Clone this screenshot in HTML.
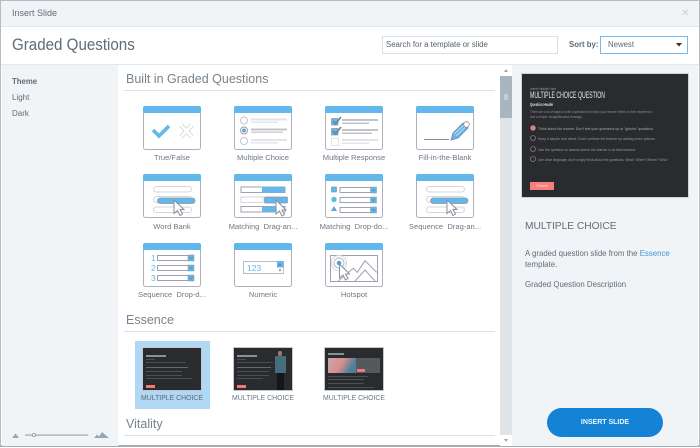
<!DOCTYPE html>
<html><head><meta charset="utf-8"><style>
html,body{margin:0;padding:0;width:700px;height:448px;overflow:hidden;background:#fff}
body{position:relative;font-family:"Liberation Sans",sans-serif;color:#66737f}
.a{position:absolute;white-space:nowrap}
.l{font-size:7.6px;color:#6d7983;text-align:center;line-height:10px}
.m{font-size:6.9px;color:#6d7983;text-align:center;line-height:10px}
.h{font-size:12.5px;color:#77838d;line-height:14px}
.t{position:absolute;background:#2a2b2f;border:1px solid #c4c8cc;box-sizing:border-box;overflow:hidden}
.ln{position:absolute;height:1px;background:#4c4e52}
.s{transform-origin:0 50%}
.b{filter:blur(.3px)}
</style></head><body>
<div class="a" style="left:0;top:0;width:700px;height:447px;box-sizing:border-box;border:1px solid #b9bcbe;border-bottom:2px solid #a9acae"></div>
<div class="a" style="left:1px;top:1px;width:698px;height:25px;background:#f1f4f7;border-bottom:1px solid #e2e6ea"></div>
<div class="a" style="left:12px;top:7px;font-size:9px;line-height:13px;color:#5f6c77">Insert Slide</div>
<div class="a" style="left:681px;top:7px;font-size:10px;line-height:13px;color:#c9ced2">✕</div>
<div class="a s" style="left:12px;top:34px;font-size:17px;line-height:22px;color:#5e6d7a;transform:scaleX(.89)">Graded Questions</div>
<div class="a" style="left:382px;top:36px;width:176px;height:18px;box-sizing:border-box;border:1px solid #d9e0e5;font-size:7.800px;line-height:16px;padding-left:3px;color:#58636d">Search for a template or slide</div>
<div class="a" style="left:569px;top:39px;font-size:7.8px;font-weight:bold;line-height:12px;color:#5f6c77">Sort by:</div>
<div class="a" style="left:600px;top:36px;width:88px;height:18px;box-sizing:border-box;border:1px solid #79b8ea;font-size:7.8px;line-height:16px;padding-left:7px;color:#5f6c77">Newest</div>
<svg class="a" style="left:676px;top:43px" width="6" height="4"><path d="M0 0H6L3 3.6Z" fill="#333"/></svg>
<div class="a" style="left:1px;top:64px;width:698px;height:1px;background:#e4e8eb"></div>
<div class="a" style="left:2px;top:65px;width:116px;height:381px;background:#f1f4f7"></div>
<div class="a" style="left:12px;top:76px;font-size:7.8px;font-weight:bold;line-height:12px;color:#5f6c77">Theme</div>
<div class="a" style="left:12px;top:92px;font-size:8px;line-height:12px;color:#5f6c77">Light</div>
<div class="a" style="left:12px;top:108px;font-size:8px;line-height:12px;color:#5f6c77">Dark</div>
<svg class="a" style="left:10px;top:430px" width="102" height="12" fill="#9aa7b1"><path d="M2 8L5.500 3.500L9 8Z"/><rect x="15" y="4.500" width="63" height="1.200"/><circle cx="24" cy="5" r="1.600" fill="#f1f4f7" stroke="#8a98a3" stroke-width=".8"/><path d="M84 8L87 4.500L89 6.500L92 2L99 8Z"/></svg>
<div class="a h" style="left:126px;top:72px">Built in Graded Questions</div>
<div class="a" style="left:124px;top:90px;width:371px;height:1px;background:#dfe1e3"></div>
<div class="a h" style="left:126px;top:313px">Essence</div>
<div class="a" style="left:124px;top:331px;width:371px;height:1px;background:#dfe1e3"></div>
<div class="a h" style="left:126px;top:417px">Vitality</div>
<div class="a" style="left:124px;top:435px;width:371px;height:1px;background:#dfe1e3"></div>

<div class="a" style="left:500px;top:65px;width:12px;height:381px;background:#dfe4e8"></div>
<div class="a" style="left:500px;top:65px;width:12px;height:11px;background:#fff"></div>
<div class="a" style="left:500px;top:76px;width:12px;height:42px;background:#a9b6c0"></div>
<div class="a" style="left:504px;top:94px;width:4px;height:6px;background:#c5ced5"></div>
<div class="a" style="left:500px;top:435px;width:12px;height:11px;background:#fff"></div>
<svg class="a" style="left:500px;top:65px" width="12" height="381" fill="#9aa5ae"><path d="M4 7L6 4L8 7Z"/><path d="M4 374L6 377L8 374Z"/></svg>
<div class="a" style="left:512px;top:65px;width:186px;height:381px;background:#f1f4f7"></div>

<!-- icons -->
<svg class="a" style="left:0;top:0" width="700" height="448">
<defs>
<g id="w"><rect x=".5" y=".5" width="57" height="43" rx="2" fill="#fff" stroke="#aeb0bc"/><path d="M0 7V2Q0 0 2 0H56Q58 0 58 2V7Z" fill="#62b8ea"/></g>
<g id="bk"><rect x="10.500" y="12.500" width="38" height="5.500" rx="2.750" fill="#fff" stroke="#d5d6da"/><rect x="10.500" y="22.500" width="38" height="6" rx="3" fill="#fff" stroke="#d5d6da"/><rect x="10.500" y="33" width="38" height="5.500" rx="2.750" fill="#fff" stroke="#d5d6da"/><rect x="14.500" y="24" width="37.500" height="5.500" rx="2.750" fill="#62b8ea" stroke="#8a93a6" stroke-width=".7"/><path d="M31 26V39.500L34.500 36.500L37 41.500L39.500 40L37 35.500H41Z" fill="#fff" stroke="#8b8f9b"/></g>
<g id="dd"><rect x=".5" y=".5" width="36" height="5" fill="#fff" stroke="#9da1b0"/><rect x="31" y="0" width="6" height="6" fill="#62b8ea" stroke="#8a93a6" stroke-width=".5"/><path d="M32.500 2L34 4L35.500 2" fill="none" stroke="#4d7ea3" stroke-width=".6"/></g>
</defs>
<g transform="translate(143 106)"><use href="#w"/><path d="M10 24L16 30L26 20" fill="none" stroke="#62b8ea" stroke-width="3.600"/><path d="M38 19L49 31M49 19L38 31" stroke="#d0d2d6" stroke-width="4.400" fill="none"/><path d="M38 19L49 31M49 19L38 31" stroke="#fff" stroke-width="2.800" fill="none"/></g>
<g transform="translate(234 106)"><use href="#w"/><circle cx="10" cy="14.500" r="3.500" fill="#fff" stroke="#c4c5cb"/><circle cx="10" cy="24.500" r="3.500" fill="#fff" stroke="#9a9eac"/><circle cx="10" cy="24.500" r="2" fill="#62a9d8"/><circle cx="10" cy="35" r="3.500" fill="#fff" stroke="#c4c5cb"/><g fill="#e3e4e7"><rect x="17" y="12.500" width="36" height="2"/><rect x="17" y="15.500" width="27" height="1.500"/><rect x="17" y="33" width="36" height="2"/><rect x="17" y="36" width="27" height="1.500"/></g><rect x="17" y="22.500" width="36" height="2" fill="#c2c4ca"/><rect x="17" y="25.500" width="32" height="1.500" fill="#d0d1d6"/></g>
<g transform="translate(325 106)"><use href="#w"/><g fill="#62b8ea" stroke="#8a93a6" stroke-width=".7"><rect x="6.500" y="12.500" width="6.500" height="6.500"/><rect x="6.500" y="22.500" width="6.500" height="6.500"/></g><rect x="6.500" y="32.500" width="7" height="7" fill="#fff" stroke="#e3e4e7"/><path d="M8 15L10.500 18L16 11M8 25L10.500 28L16 21" stroke="#62859f" stroke-width="1.600" fill="none"/><g fill="#c2c4ca"><rect x="17" y="13" width="36" height="2"/><rect x="17" y="16.500" width="27" height="1.500"/><rect x="17" y="23" width="36" height="2"/><rect x="17" y="26.500" width="30" height="1.500"/></g><g fill="#e3e4e7"><rect x="17" y="33" width="36" height="2"/><rect x="17" y="36.500" width="27" height="1.500"/></g></g>
<g transform="translate(416 106)"><use href="#w"/><path d="M8 33.500H33" stroke="#8a8d99" stroke-width="1"/><path d="M35 34L37 27L47 17L52 22L42 32Z" fill="#62b8ea" stroke="#7a8599" stroke-width=".8"/><path d="M38 28L49 18M40 30L50.500 20" stroke="#dfe9f1" stroke-width=".7"/><circle cx="50.500" cy="18.500" r="2.800" fill="#fff" stroke="#8a8d99" stroke-width=".8"/></g>

<g transform="translate(143 174)"><use href="#w"/><use href="#bk"/></g>
<g transform="translate(234 174)"><use href="#w"/><rect x="7" y="13" width="44" height="5.500" fill="#fff" stroke="#9da1b0"/><rect x="28" y="13" width="23" height="5.500" rx="1" fill="#62b8ea"/><rect x="7" y="23" width="22" height="5.500" fill="#fff" stroke="#d5d6da"/><rect x="30.500" y="23" width="23" height="6" rx="1" fill="#62b8ea" stroke="#8a93a6" stroke-width=".7"/><rect x="7" y="32.500" width="44" height="5.500" fill="#fff" stroke="#9da1b0"/><rect x="28" y="32.500" width="18" height="5.500" rx="1" fill="#62b8ea"/><path d="M42 26V40L45.500 37L48 42L50.500 40.500L48 36H52Z" fill="#fff" stroke="#8b8f9b"/></g>
<g transform="translate(325 174)"><use href="#w"/><rect x="6.500" y="13" width="5" height="5" fill="#62b8ea" stroke="#7a8da3" stroke-width=".6"/><circle cx="9" cy="25.500" r="2.700" fill="#62b8ea"/><path d="M6 37L9 32L12 37Z" fill="#5aa7d8"/><use href="#dd" transform="translate(14.500 13)"/><use href="#dd" transform="translate(14.500 23)"/><use href="#dd" transform="translate(14.500 33)"/></g>
<g transform="translate(416 174)"><use href="#w"/><use href="#bk"/></g>

<g transform="translate(143 243)"><use href="#w"/><g font-family="Liberation Sans" font-size="8.500" fill="#62b8ea"><text x="8" y="18">1</text><text x="8" y="28">2</text><text x="8" y="38">3</text></g><use href="#dd" transform="translate(14 12)"/><use href="#dd" transform="translate(14 22)"/><use href="#dd" transform="translate(14 32)"/></g>
<g transform="translate(234 243)"><use href="#w"/><rect x="9.500" y="18.500" width="40" height="12" fill="#fff" stroke="#b9bbc6"/><rect x="43" y="18" width="6.500" height="6.500" fill="#62b8ea"/><path d="M44.500 23L46 21L47.500 23" fill="none" stroke="#4d7ea3" stroke-width=".7"/><path d="M44.500 26.500L46 28.500L47.500 26.500Z" fill="#777"/><text x="13" y="28" font-family="Liberation Sans" font-size="8.500" fill="#62b8ea">123</text></g>
<g transform="translate(325 243)"><use href="#w"/><rect x="5.500" y="12.500" width="47" height="26" fill="#fff" stroke="#9da1b0"/><circle cx="14" cy="20" r="7.500" fill="none" stroke="#d3d5da"/><circle cx="14" cy="20" r="5" fill="none" stroke="#b9bbc6"/><circle cx="14" cy="20" r="2.300" fill="#4da4df"/><path d="M13.300 38L28.300 25.300L32.300 29.300L40 17.700L51.700 29.300M30 38L40 27L50 38" fill="none" stroke="#9da1b0"/><path d="M14.500 21V35L18 32L20.500 37L23 35.500L20.500 31H24.500Z" fill="#fff" stroke="#8b8f9b"/></g>
</svg>

<div class="a l" style="left:122px;top:153px;width:100px">True/False</div>
<div class="a l" style="left:213px;top:153px;width:100px">Multiple Choice</div>
<div class="a l" style="left:304px;top:153px;width:100px">Multiple Response</div>
<div class="a l" style="left:395px;top:153px;width:100px">Fill-in-the-Blank</div>
<div class="a l" style="left:122px;top:222px;width:100px">Word Bank</div>
<div class="a l" style="left:213px;top:222px;width:100px">Matching &nbsp;Drag-an...</div>
<div class="a l" style="left:304px;top:222px;width:100px">Matching &nbsp;Drop-do...</div>
<div class="a l" style="left:395px;top:222px;width:100px">Sequence &nbsp;Drag-an...</div>
<div class="a l" style="left:122px;top:290px;width:100px">Sequence &nbsp;Drop-d...</div>
<div class="a l" style="left:213px;top:290px;width:100px">Numeric</div>
<div class="a l" style="left:304px;top:290px;width:100px">Hotspot</div>

<!-- thumbnails -->
<div class="a" style="left:135px;top:341px;width:75px;height:68px;background:#b0d7f3"></div>
<div class="t b" style="left:142px;top:347px;width:60px;height:44px">
<div class="ln" style="left:3px;top:7px;width:20px;height:2px;background:#8f8f91"></div>
<div class="ln" style="left:3px;top:11px;width:9px"></div><div class="ln" style="left:3px;top:14px;width:40px"></div>
<div class="ln" style="left:3px;top:19px;width:42px;background:#66686c"></div><div class="ln" style="left:3px;top:23px;width:36px"></div><div class="ln" style="left:3px;top:27px;width:36px"></div><div class="ln" style="left:3px;top:30px;width:46px"></div>
<div class="a" style="left:3px;top:37px;width:9px;height:3px;background:#f07a78"></div></div>
<div class="t b" style="left:233px;top:347px;width:60px;height:44px">
<div class="ln" style="left:3px;top:7px;width:20px;height:2px;background:#8f8f91"></div>
<div class="ln" style="left:3px;top:11px;width:9px"></div><div class="ln" style="left:3px;top:14px;width:36px"></div>
<div class="ln" style="left:3px;top:19px;width:34px;background:#66686c"></div><div class="ln" style="left:3px;top:23px;width:32px"></div><div class="ln" style="left:3px;top:27px;width:32px"></div><div class="ln" style="left:3px;top:30px;width:26px"></div>
<div class="a" style="left:3px;top:37px;width:9px;height:3px;background:#f07a78"></div>
<div class="a" style="left:44px;top:3px;width:4px;height:5px;border-radius:2px;background:#9a7c68"></div>
<div class="a" style="left:41px;top:8px;width:11px;height:17px;background:#456d7c"></div>
<div class="a" style="left:43px;top:25px;width:7px;height:17px;background:#15161a"></div></div>
<div class="t b" style="left:324px;top:347px;width:60px;height:44px">
<div class="ln" style="left:3px;top:5px;width:16px;height:2px;background:#8f8f91"></div>
<div class="a" style="left:3px;top:10px;width:28px;height:15px;background:linear-gradient(120deg,#c9a6a8,#d88f8c 45%,#4f7f9c 80%)"></div>
<div class="a" style="left:31px;top:10px;width:24px;height:15px;background:#55585d"></div>
<div class="a" style="left:32px;top:21px;width:8px;height:3px;background:#f07a78"></div>
<div class="ln" style="left:3px;top:28px;width:40px"></div><div class="ln" style="left:3px;top:31px;width:36px"></div><div class="ln" style="left:3px;top:35px;width:36px"></div><div class="ln" style="left:3px;top:39px;width:46px"></div></div>
<div class="a m" style="left:122px;top:394px;width:100px;color:#5a6a76">MULTIPLE CHOICE</div>
<div class="a m" style="left:213px;top:394px;width:100px">MULTIPLE CHOICE</div>
<div class="a m" style="left:304px;top:394px;width:100px">MULTIPLE CHOICE</div>

<!-- preview -->
<div class="t b" style="left:521px;top:73px;width:168px;height:125px;border-color:#cfd3d6;color:#c8c8ca">
<div class="a s" style="left:8px;top:12px;font-size:4px;line-height:5px;color:#999;transform:scaleX(.77)">Insert Header Here</div>
<div class="a s" style="left:8px;top:16px;font-size:9.500px;line-height:11px;color:#e8e8e8;transform:scaleX(.545)">MULTIPLE CHOICE QUESTION</div>
<div class="a s" style="left:8px;top:28px;font-size:4.500px;line-height:6px;font-weight:bold;color:#ddd;transform:scaleX(.65)">Question Header</div>
<div class="a s" style="left:8px;top:36px;font-size:3.800px;line-height:5px;color:#8f8f91;transform:scaleX(.79)">There are a lot of ways to write a question that helps your learner reflect on their experience.<br>Use a simple, straightforward message.</div>
<svg class="a" style="left:7px;top:50px" width="8" height="40"><circle cx="4" cy="4" r="2.500" fill="#f07a78" stroke="#999" stroke-width=".5"/><g fill="none" stroke="#999" stroke-width=".6"><circle cx="4" cy="14" r="2.500"/><circle cx="4" cy="25" r="2.500"/><circle cx="4" cy="35" r="2.500"/></g></svg>
<div class="a s" style="left:16px;top:52px;font-size:3.900px;line-height:5px;color:#aaa;transform:scaleX(.9)">Think about the learner. Don't test your questions up or "gotcha" questions.</div>
<div class="a s" style="left:16px;top:62px;font-size:3.900px;line-height:5px;color:#999;transform:scaleX(.9)">Keep it simple and direct. Don't confuse the learner by adding more options.</div>
<div class="a s" style="left:16px;top:73px;font-size:3.900px;line-height:5px;color:#999;transform:scaleX(.89)">Use the question to assess where the learner is at that moment.</div>
<div class="a s" style="left:16px;top:83px;font-size:3.900px;line-height:5px;color:#999;transform:scaleX(.85)">Use clear language; don't simply think about the questions. What? When? Where? Who?</div>
<div class="a" style="left:8px;top:108px;width:24px;height:8px;background:#f47f7b;font-size:3.800px;line-height:8px;color:#fde;text-align:center">Submit</div>
</div>

<div class="a" style="left:525px;top:220px;font-size:10.200px;line-height:13px;color:#5f6c77">MULTIPLE CHOICE</div>
<div class="a" style="left:525px;top:248px;font-size:7.850px;line-height:11px;color:#5f6c77">A graded question slide from the <span style="color:#3f94d8">Essence</span></div>
<div class="a" style="left:525px;top:259px;font-size:7.850px;line-height:11px;color:#5f6c77">template.</div>
<div class="a" style="left:525px;top:279px;font-size:7.850px;line-height:11px;color:#5f6c77">Graded Question Description</div>
<div class="a" style="left:547px;top:408px;width:116px;height:29px;border-radius:15px;background:#1483d6;color:#eaf4fb;font-size:7px;font-weight:bold;line-height:29px;text-align:center">INSERT SLIDE</div>
</body></html>
